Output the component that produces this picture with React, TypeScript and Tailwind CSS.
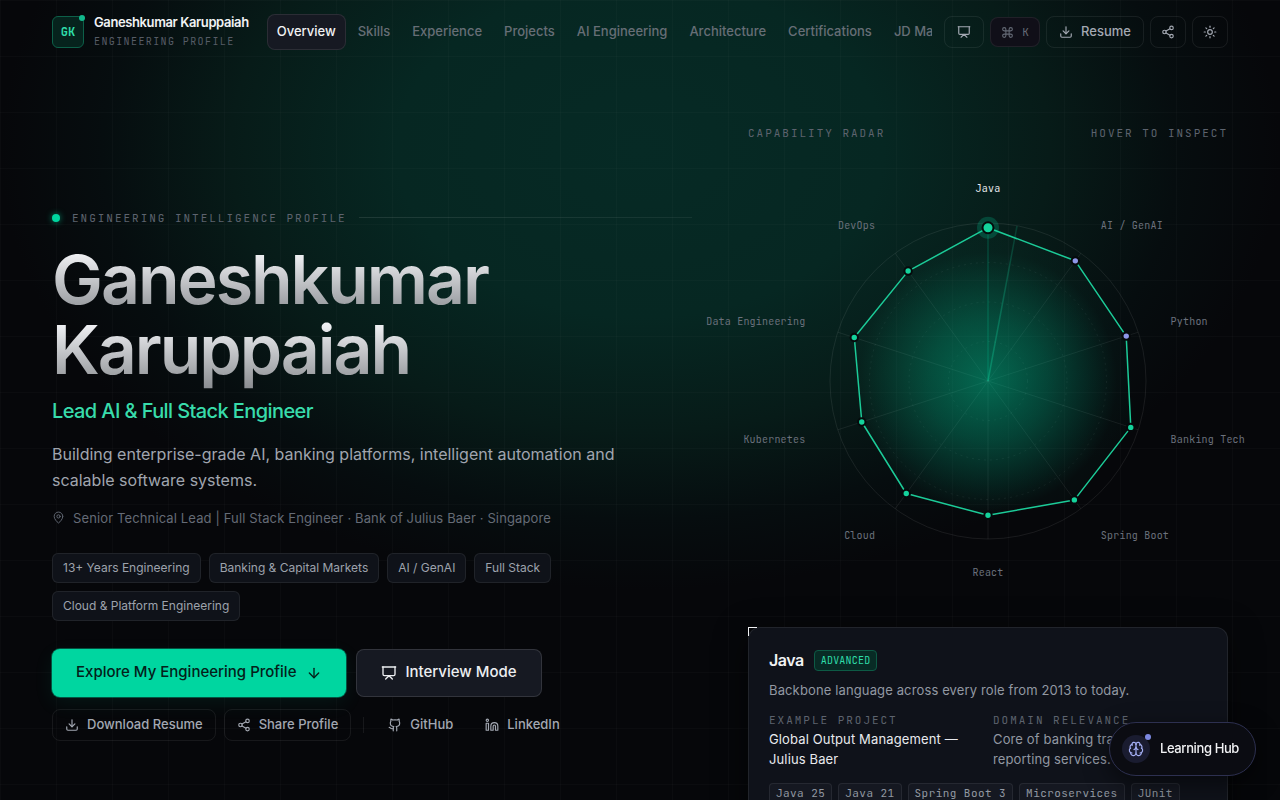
import type { ReactNode } from 'react';
import {
  ArrowDown,
  Brain,
  Command,
  Download,
  Github,
  Linkedin,
  MapPin,
  Presentation,
  Share2,
  Sun,
} from 'lucide-react';
import clsx from 'clsx';

const MONO = 'font-["JetBrains_Mono","DejaVu_Sans_Mono",monospace]';
const EYEBROW =
  'font-["JetBrains_Mono","DejaVu_Sans_Mono",monospace] text-[11px] leading-4 tracking-[0.18em] uppercase text-[#5d636e]';

const NAV = [
  'Overview',
  'Skills',
  'Experience',
  'Projects',
  'AI Engineering',
  'Architecture',
  'Certifications',
  'JD Match',
];

const TAGS = [
  '13+ Years Engineering',
  'Banking & Capital Markets',
  'AI / GenAI',
  'Full Stack',
  'Cloud & Platform Engineering',
];

const STACK = ['Java 25', 'Java 21', 'Spring Boot 3', 'Microservices', 'JUnit'];

type Skill = { name: string; score: number; ai?: boolean };

const SKILLS: Skill[] = [
  { name: 'Java', score: 0.97 },
  { name: 'AI / GenAI', score: 0.94, ai: true },
  { name: 'Python', score: 0.92, ai: true },
  { name: 'Banking Tech', score: 0.95 },
  { name: 'Spring Boot', score: 0.93 },
  { name: 'React', score: 0.85 },
  { name: 'Cloud', score: 0.88 },
  { name: 'Kubernetes', score: 0.84 },
  { name: 'Data Engineering', score: 0.89 },
  { name: 'DevOps', score: 0.86 },
];

const CENTER = 240;
const RADIUS = 158;
const LABEL_RADIUS = 192;

function polar(index: number, r: number) {
  const angle = (index / SKILLS.length) * Math.PI * 2 - Math.PI / 2;
  return { x: CENTER + Math.cos(angle) * r, y: CENTER + Math.sin(angle) * r };
}

function Radar() {
  const points = SKILLS.map((s, i) => polar(i, s.score * RADIUS));
  const outline = points.map((p) => `${p.x.toFixed(1)},${p.y.toFixed(1)}`).join(' ');
  return (
    <svg viewBox="0 0 480 480" className="block w-full overflow-visible" role="img" aria-label="Capability radar">
      <defs>
        <radialGradient id="radar-fill" gradientUnits="userSpaceOnUse" cx={CENTER} cy={CENTER} r="150">
          <stop offset="0" stopColor="#00d6a0" stopOpacity="0.44" />
          <stop offset="0.4" stopColor="#00d6a0" stopOpacity="0.27" />
          <stop offset="0.86" stopColor="#00d6a0" stopOpacity="0.03" />
          <stop offset="1" stopColor="#00d6a0" stopOpacity="0.02" />
        </radialGradient>
        <linearGradient id="sweep" gradientUnits="userSpaceOnUse" x1={CENTER} y1={CENTER} x2="269" y2="85">
          <stop offset="0" stopColor="#10c896" stopOpacity="0.4" />
          <stop offset="1" stopColor="#10c896" stopOpacity="0.18" />
        </linearGradient>
      </defs>
      {[0.25, 0.5, 0.75].map((f) => (
        <circle key={f} cx={CENTER} cy={CENTER} r={RADIUS * f} fill="none" stroke="#fff" strokeOpacity="0.06" strokeDasharray="2 4" />
      ))}
      <circle cx={CENTER} cy={CENTER} r={RADIUS} fill="none" stroke="#fff" strokeOpacity="0.08" />
      {SKILLS.map((s, i) => {
        const end = polar(i, RADIUS);
        return (
          <line
            key={s.name}
            x1={CENTER}
            y1={CENTER}
            x2={end.x}
            y2={end.y}
            stroke={i === 0 ? '#00d6a0' : '#fff'}
            strokeOpacity={i === 0 ? 0.3 : 0.07}
          />
        );
      })}
      <polygon points={outline} fill="url(#radar-fill)" stroke="#1ccb98" strokeWidth="1.5" strokeLinejoin="round" />
      <line x1={CENTER} y1={CENTER} x2="269" y2="85" stroke="url(#sweep)" strokeWidth="1.5" />
      {points.map((p, i) => (
        <g key={SKILLS[i].name}>
          {i === 0 && <circle cx={p.x} cy={p.y} r="11" fill="#00d6a0" fillOpacity="0.22" />}
          <circle
            cx={p.x}
            cy={p.y}
            r={i === 0 ? 5.5 : 3.7}
            fill={SKILLS[i].ai ? '#8f97ea' : '#14d39c'}
            stroke="#060a0c"
            strokeWidth="2"
          />
        </g>
      ))}
      {SKILLS.map((s, i) => {
        const p = polar(i, LABEL_RADIUS);
        const side = Math.round(p.x - CENTER);
        return (
          <text
            key={s.name}
            x={p.x}
            y={p.y + 3}
            textAnchor={side === 0 ? 'middle' : side > 0 ? 'start' : 'end'}
            className={clsx(MONO, 'text-[10px] tracking-[0.02em]', i === 0 ? 'fill-[#e8eaee]' : 'fill-[#6b717c]')}
          >
            {s.name}
          </text>
        );
      })}
    </svg>
  );
}

function GhostButton({ children, className, label }: { children: ReactNode; className?: string; label?: string }) {
  return (
    <button
      type="button"
      aria-label={label}
      className={clsx(
        'flex h-8 shrink-0 items-center justify-center gap-2 rounded-lg border border-white/7 text-[13px] font-medium text-[#a3a8b2]',
        className,
      )}
    >
      {children}
    </button>
  );
}

function Header() {
  return (
    <header className="flex h-16 items-center px-[52px]">
      <a href="#top" className="mr-[18px] flex shrink-0 items-center gap-2.5">
        <span
          className={clsx(
            MONO,
            'relative flex size-8 items-center justify-center rounded-md border border-[#0d6049] bg-[#06231d] text-xs font-bold text-[#2fdca9]',
          )}
        >
          GK
          <span className="absolute -top-0.5 -right-0.5 size-1.5 rounded-full bg-[#12b88c]" />
        </span>
        <span className="flex flex-col">
          <span className="text-[13px] leading-5 font-semibold tracking-[-0.03em] text-[#f1f2f4]">Ganeshkumar Karuppaiah</span>
          <span className={clsx(MONO, 'text-[10px] leading-5 tracking-[0.14em] text-[#565c66]')}>ENGINEERING PROFILE</span>
        </span>
      </a>
      <nav className="mr-3 flex min-w-0 flex-1 gap-0.5 overflow-hidden">
        {NAV.map((item, i) => (
          <a
            key={item}
            href={`#${item.toLowerCase().replace(' ', '-')}`}
            className={clsx(
              'flex h-9 shrink-0 items-center rounded-lg border px-[9px] text-[13px] font-medium',
              i === 0 ? 'border-white/9 bg-[#161922] text-[#f1f2f4]' : 'border-transparent text-[#666e76]',
            )}
          >
            {item}
          </a>
        ))}
      </nav>
      <div className="flex shrink-0 items-center gap-1.5">
        <GhostButton label="Interview mode" className="w-10">
          <Presentation size={14} strokeWidth={2} />
        </GhostButton>
        <button
          type="button"
          className={clsx(
            MONO,
            'flex h-[30px] w-[50px] items-center justify-center gap-2 rounded-lg border border-white/7 bg-[#100f18] text-[11px] text-[#646a75]',
          )}
        >
          <Command size={13} strokeWidth={2} />K
        </button>
        <GhostButton className="px-3">
          <Download size={14} strokeWidth={2} />
          Resume
        </GhostButton>
        <GhostButton label="Share" className="w-9">
          <Share2 size={14} strokeWidth={2} />
        </GhostButton>
        <GhostButton label="Toggle theme" className="w-9">
          <Sun size={14} strokeWidth={2} />
        </GhostButton>
      </div>
    </header>
  );
}

function Intro() {
  return (
    <section className="flex flex-col">
      <div className="flex items-center gap-3">
        <span className="size-2 rounded-full bg-[#00d6a0] shadow-[0_0_6px_rgba(0,214,160,0.6)]" />
        <span className={EYEBROW}>Engineering Intelligence Profile</span>
        <span className="h-px flex-1 bg-linear-to-r from-white/10 to-white/6" />
      </div>
      <h1 className="mt-[18px] text-[68px] leading-[70px] font-semibold tracking-[-0.03em]">
        <span className="block bg-linear-to-b from-[#f4f5f8] from-10% to-[#8f9296] bg-clip-text text-transparent">
          Ganeshkumar
        </span>
        <span className="-mb-2 block bg-linear-to-b from-[#f4f5f8] from-10% to-[#85888c] bg-clip-text pb-2 text-transparent">
          Karuppaiah
        </span>
      </h1>
      <p className="mt-[13px] text-xl leading-7 font-medium tracking-[-0.03em] text-[#38dcab]">
        Lead AI &amp; Full Stack Engineer
      </p>
      <p className="mt-4 max-w-[576px] text-base leading-[26px] text-[#a0a5af]">
        Building enterprise-grade AI, banking platforms, intelligent automation and scalable software systems.
      </p>
      <p className="mt-[15px] flex items-center gap-2 text-[13px] leading-5 tracking-[0.01em] text-[#656b76]">
        <MapPin size={13} strokeWidth={1.75} />
        Senior Technical Lead | Full Stack Engineer · Bank of Julius Baer · Singapore
      </p>
      <ul className="mt-[25px] flex max-w-[576px] flex-wrap gap-2">
        {TAGS.map((tag) => (
          <li
            key={tag}
            className="flex h-[30px] items-center rounded-md border border-white/7 bg-[#0f1219] px-2.5 text-xs text-[#9da2ac]"
          >
            {tag}
          </li>
        ))}
      </ul>
      <div className="mt-7 flex flex-wrap gap-2.5">
        <a
          href="#profile"
          className="flex h-12 items-center gap-2.5 rounded-lg bg-[#00d6a0] px-6 text-[15px] font-medium text-[#04211a] shadow-[0_0_0_1px_rgba(0,214,160,0.35),0_6px_20px_rgba(0,214,160,0.08)]"
        >
          Explore My Engineering Profile
          <ArrowDown size={16} strokeWidth={2} />
        </a>
        <button
          type="button"
          className="flex h-12 items-center gap-2 rounded-lg border border-white/12 bg-[#161922] px-6 text-[15px] font-medium text-[#eceef1]"
        >
          <Presentation size={16} strokeWidth={2} />
          Interview Mode
        </button>
      </div>
      <div className="mt-3 flex flex-wrap items-center gap-2">
        <GhostButton className="px-3">
          <Download size={14} strokeWidth={2} />
          Download Resume
        </GhostButton>
        <GhostButton className="px-3">
          <Share2 size={14} strokeWidth={2} />
          Share Profile
        </GhostButton>
        <span className="mx-1 h-4 w-px bg-white/7" />
        <a href="#github" className="flex h-8 items-center gap-2 px-3 text-[13px] font-medium text-[#a3a8b2]">
          <Github size={14} strokeWidth={2} />
          GitHub
        </a>
        <a href="#linkedin" className="flex h-8 items-center gap-2 px-3 text-[13px] font-medium text-[#a3a8b2]">
          <Linkedin size={14} strokeWidth={2} />
          LinkedIn
        </a>
      </div>
    </section>
  );
}

function SkillCard() {
  return (
    <article className="relative mt-1.5 rounded-xl border border-white/8 bg-[#0f121a] p-5 shadow-[0_8px_32px_rgba(0,0,0,0.5)]">
      <span className="absolute -top-px -left-px size-[9px] border-t border-l border-[#f1f2f4]" />
      <div className="flex items-center gap-2.5">
        <h2 className="text-base leading-6 font-semibold tracking-[-0.03em] text-[#f1f2f4]">Java</h2>
        <span
          className={clsx(
            MONO,
            'rounded-sm border border-[#0d5a45] bg-[#082b25] px-1.5 text-[10px] leading-[19px] tracking-[0.02em] text-[#2fdca9]',
          )}
        >
          ADVANCED
        </span>
      </div>
      <p className="mt-2 text-[13px] leading-5 tracking-[0.01em] text-[#9298a2]">
        Backbone language across every role from 2013 to today.
      </p>
      <div className="mt-3 grid grid-cols-2 gap-2.5">
        <div>
          <h3 className={EYEBROW}>Example Project</h3>
          <p className="mt-px text-[13px] leading-5 tracking-[0.01em] text-[#e8eaee]">Global Output Management — Julius Baer</p>
        </div>
        <div>
          <h3 className={EYEBROW}>Domain Relevance</h3>
          <p className="mt-px text-[13px] leading-5 tracking-[0.01em] text-[#9298a2]">
            Core of banking transaction and reporting services.
          </p>
        </div>
      </div>
      <ul className="mt-3.5 flex flex-wrap gap-1.5">
        {STACK.map((item) => (
          <li
            key={item}
            className={clsx(
              MONO,
              'rounded-sm border border-white/7 bg-[#151821] px-1.5 text-[11px] leading-[19px] tracking-[0.04em] text-[#9298a2]',
            )}
          >
            {item}
          </li>
        ))}
      </ul>
    </article>
  );
}

export default function App() {
  return (
    <div
      id="top"
      className="h-screen overflow-x-hidden overflow-y-auto bg-[#06070a] font-[Inter,sans-serif] [scrollbar-width:none]"
    >
      <div className="min-h-full bg-[linear-gradient(to_right,rgba(255,255,255,0.018)_1px,transparent_1px),linear-gradient(to_bottom,rgba(255,255,255,0.018)_1px,transparent_1px),radial-gradient(ellipse_50%_440px_at_50%_150px,#062a25_0%,#062722_38%,#071b18_64%,#060d0f_84%,transparent_100%)] bg-[size:56px_56px,56px_56px,100%_100%]">
        <Header />
        <main className="grid grid-cols-[4fr_3fr] items-center gap-14 px-[52px] pt-[61px] pb-16">
          <Intro />
          <section>
            <div className="flex justify-between">
              <h2 className={EYEBROW}>Capability Radar</h2>
              <span className={EYEBROW}>Hover to inspect</span>
            </div>
            <Radar />
            <SkillCard />
          </section>
        </main>
      </div>
      <button
        type="button"
        className="fixed right-6 bottom-6 flex h-[54px] items-center gap-2.5 rounded-full border border-[#2d3050] bg-[#0b0c12] pr-4 pl-3 text-[13px] font-medium tracking-[-0.03em] text-[#f1f2f4] shadow-[0_8px_24px_rgba(0,0,0,0.5)]"
      >
        <span className="relative flex size-7 items-center justify-center rounded-full bg-[#1a1c30] text-[#a5b0f5]">
          <Brain size={16} strokeWidth={1.75} />
          <span className="absolute -top-px -right-px size-1.5 rounded-full bg-[#7c88e0]" />
        </span>
        Learning Hub
      </button>
    </div>
  );
}
